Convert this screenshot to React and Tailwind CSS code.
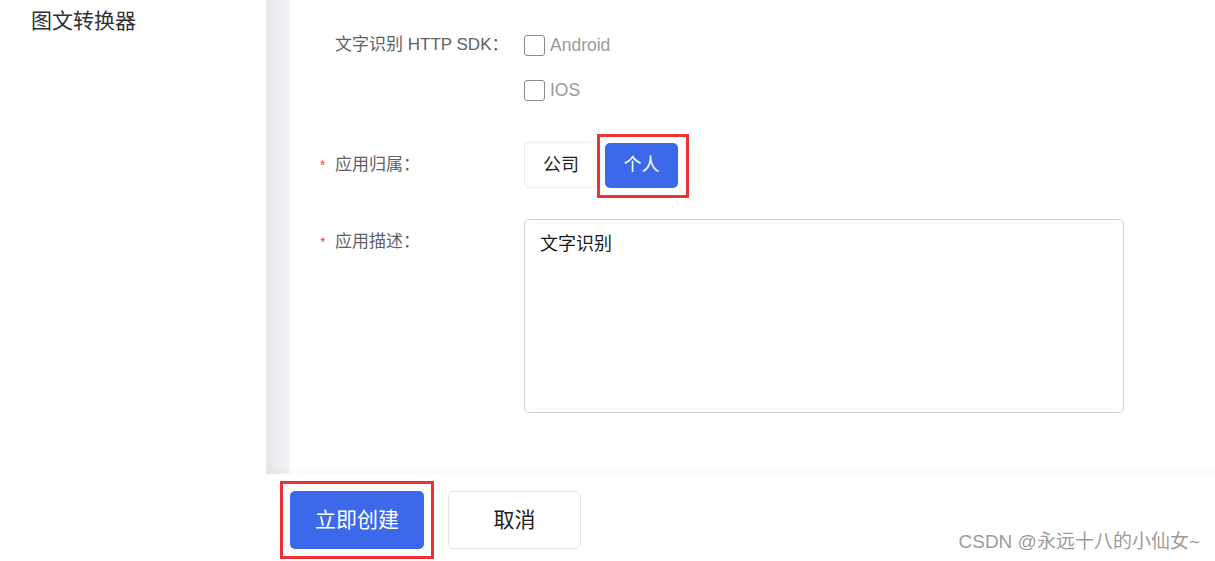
import React from "react";

const cjk = { fontFamily: '"Liberation Sans", "Noto Sans CJK SC", sans-serif' };

function Checkbox({ label }) {
  return (
    <label className="flex items-center h-[20px] gap-[5px]">
      <span className="block w-[21px] h-[21px] rounded-[3px] border border-[#8a8a8a] bg-white" />
      <span className="text-[17.5px] text-[#9a9a9a]">{label}</span>
    </label>
  );
}

function Label({ required, children, className = "" }) {
  return (
    <div className={"w-[204px] shrink-0 flex text-[17px] text-[#5f6266] " + className}>
      <span className="w-[15px] text-[#e5534b] text-[14px]">{required ? "*" : ""}</span>
      <span>{children}</span>
    </div>
  );
}

export default function App() {
  return (
    <div className="relative flex w-[1215px] h-[561px] bg-white overflow-hidden" style={cjk}>
      <aside className="w-[266px] shrink-0 bg-white pl-[31px] pt-[6px]">
        <div className="text-[21px] leading-[30px] text-[#303133]">图文转换器</div>
      </aside>
      <div className="flex-1 flex flex-col">
        <div className="flex-1 flex min-h-0">
          <div className="w-[24px] shrink-0 bg-gradient-to-r from-[#e6e6ea] to-[#f4f4f6]" />
          <main className="flex-1 bg-white pl-[30px] pt-[35px]">
            <div className="flex">
              <Label className="leading-[20px]">文字识别 HTTP SDK：</Label>
              <div className="flex flex-col gap-[25px]">
                <Checkbox label="Android" />
                <Checkbox label="IOS" />
              </div>
            </div>
            <div className="flex mt-[42px]">
              <Label required className="leading-[46px]">应用归属：</Label>
              <div className="flex gap-[7px]">
                <button className="w-[74px] h-[46px] rounded-[4px] border border-[#ebebeb] bg-white text-[18px] text-[#222]">
                  公司
                </button>
                <div className="relative">
                  <button className="w-[73px] h-[45px] mt-[1px] rounded-[5px] bg-[#3b69e9] text-[18px] text-white">
                    个人
                  </button>
                  <div className="absolute -left-[8px] -right-[11px] -top-[8px] -bottom-[10px] border-[3px] border-[#ec3237]" />
                </div>
              </div>
            </div>
            <div className="flex mt-[31px]">
              <Label required className="leading-[46px]">应用描述：</Label>
              <div className="w-[600px] h-[194px] rounded-[5px] border border-[#cfcfcf] px-[15px] pt-[13px] text-[18px] leading-[22px] text-[#1a1a1a]">
                文字识别
              </div>
            </div>
          </main>
        </div>
        <footer className="h-[87px] shrink-0 bg-white flex items-start gap-[24px] pl-[24px] pt-[17px] shadow-[0_-4px_8px_rgba(0,0,0,0.025)] z-10">
          <div className="relative">
            <button className="w-[134px] h-[58px] rounded-[5px] bg-[#3b69e9] text-[21px] text-white">
              立即创建
            </button>
            <div className="absolute -left-[10px] -right-[10px] -top-[10px] -bottom-[10px] border-[3px] border-[#ec3237]" />
          </div>
          <button className="w-[133px] h-[58px] rounded-[5px] border border-[#e4e4e4] bg-white text-[21px] text-[#222]">
            取消
          </button>
        </footer>
      </div>
      <div className="absolute z-20 right-[15px] bottom-[8px] text-[19px] leading-[22px] text-[#9c9c9c]">
        CSDN @永远十八的小仙女~
      </div>
    </div>
  );
}
